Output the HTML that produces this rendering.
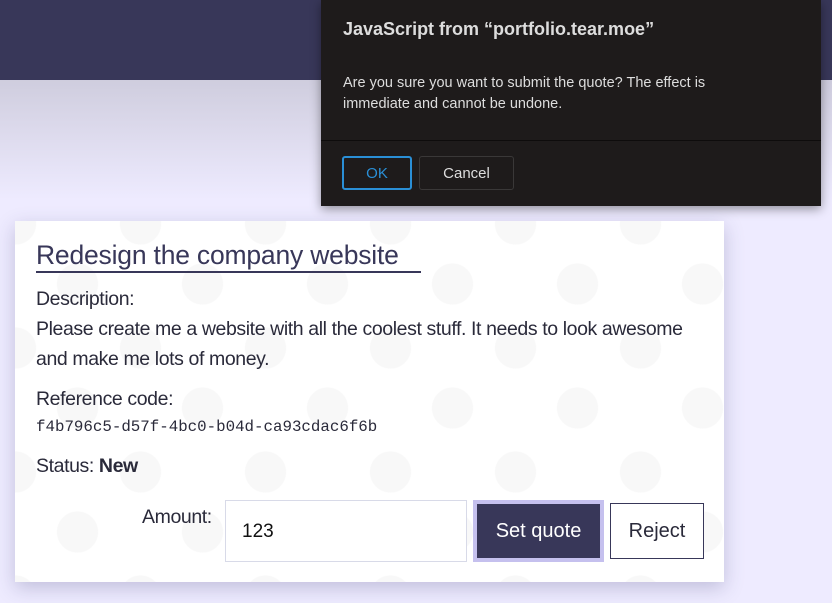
<!DOCTYPE html><html><head><style>
body{margin:0;width:832px;height:603px;overflow:hidden;background:#eeebff;font-family:"Liberation Sans",sans-serif;position:relative}
.hdr{position:absolute;left:0;top:0;width:832px;height:80px;background:#383759}
.grad{position:absolute;left:0;top:80px;width:832px;height:120px;background:linear-gradient(#cfcdde,#eeebff)}
.card{position:absolute;left:15px;top:221px;width:709px;height:361px;background-color:#fff;box-shadow:0 6px 18px rgba(60,60,110,.25);color:#2a2a3a;
background-image:radial-gradient(circle 21px,#f8f8f8 96%,transparent 100%),radial-gradient(circle 21px,#f8f8f8 96%,transparent 100%);
background-size:125px 124px;background-position:0px 1px,63px 65px}
.t{position:absolute;left:21px;top:19px;font-size:26.5px;color:#383759;letter-spacing:-0.2px;white-space:nowrap}
.ul{position:absolute;left:21px;top:50px;width:385px;height:2px;background:#383759}
.p{position:absolute;left:21px;font-size:19.5px;letter-spacing:-0.4px;white-space:nowrap}
.mono{position:absolute;left:21px;top:197px;font-family:"Liberation Mono",monospace;font-size:15.8px;color:#2a2a3a}
.inp{position:absolute;left:210px;top:279px;width:242px;height:62px;border:1px solid #d8dae8;background:#fff;box-sizing:border-box}
.btn{position:absolute;left:458px;top:279px;width:131px;height:62px;background:#383759;border:4px solid #c5c0ee;box-sizing:border-box;color:#fff;font-size:20px;text-align:center;line-height:54px}
.rej{position:absolute;left:595px;top:282px;width:94px;height:56px;border:1px solid #383759;box-sizing:border-box;background:#fff;font-size:20px;text-align:center;line-height:54px}
.dlg{position:absolute;left:321px;top:0;width:500px;height:206px;background:#1e1b1b;box-shadow:0 3px 10px rgba(0,0,0,.4);color:#e6e6e6}
.dlg .sep{position:absolute;left:0;top:140px;width:500px;height:1px;background:#0e0c0c}
.ok{position:absolute;left:21px;top:156px;width:70px;height:34px;border:2px solid #2a8fd6;border-radius:3px;box-sizing:border-box;color:#2a8fd6;text-align:center;line-height:32px;font-size:15px}
.cc{position:absolute;left:98px;top:156px;width:95px;height:34px;border:1px solid #3a3838;border-radius:3px;box-sizing:border-box;text-align:center;line-height:34px;font-size:15px;color:#ddd}
</style></head><body>
<div class="hdr"></div><div class="grad"></div>
<div class="card">
<div class="t">Redesign the company website</div><div class="ul"></div>
<div class="p" style="top:67px">Description:</div>
<div class="p" style="top:97px">Please create me a website with all the coolest stuff. It needs to look awesome</div>
<div class="p" style="top:127px">and make me lots of money.</div>
<div class="p" style="top:167px">Reference code:</div>
<div class="mono">f4b796c5-d57f-4bc0-b04d-ca93cdac6f6b</div>
<div class="p" style="top:234px">Status: <b>New</b></div>
<div class="p" style="top:285px;left:127px">Amount:</div>
<div class="inp"><span style="position:absolute;left:16px;top:20px;font-size:19px;color:#111">123</span></div>
<div class="btn">Set quote</div>
<div class="rej">Reject</div>
</div>
<div class="dlg">
<div style="position:absolute;left:22px;top:19px;font-size:18px;font-weight:bold;color:#ddd">JavaScript from “portfolio.tear.moe”</div>
<div style="position:absolute;left:22px;top:73px;font-size:14.5px;line-height:21px;width:420px;color:#ddd">Are you sure you want to submit the quote? The effect is immediate and cannot be undone.</div>
<div class="sep"></div>
<div class="ok">OK</div><div class="cc">Cancel</div>
</div>
</body></html>
